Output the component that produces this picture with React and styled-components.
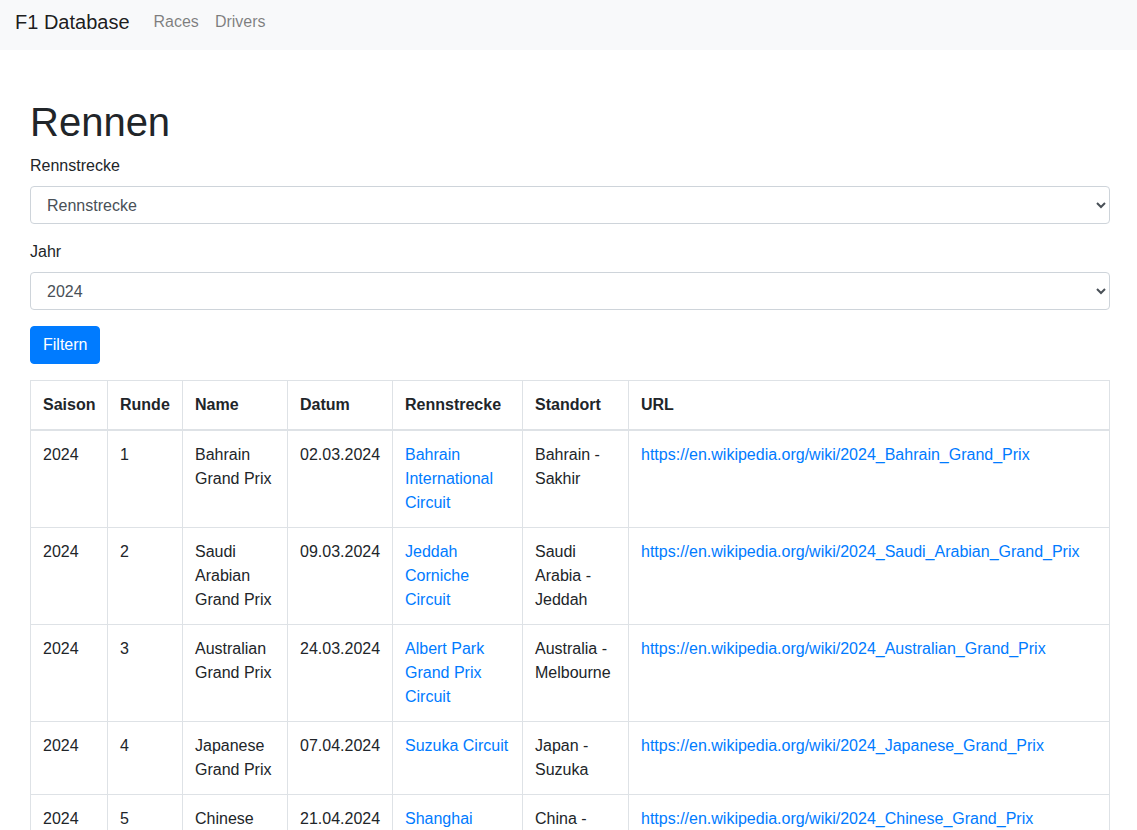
import React from 'react';
import styled, { createGlobalStyle } from 'styled-components';

const GlobalStyle = createGlobalStyle`
  body {
    margin: 0;
    font-family: "Liberation Sans", Arial, sans-serif;
    font-size: 16px;
    line-height: 1.5;
    color: #212529;
    background: #fff;
  }
  * { box-sizing: border-box; }
`;

const Navbar = styled.nav`
  display: flex;
  align-items: flex-start;
  height: 50px;
  padding: 0 16px 0 15px;
  background-color: #f8f9fa;
`;

const Brand = styled.a`
  padding-top: 7px;
  margin-right: 16px;
  font-size: 20px;
  line-height: 30px;
  color: rgba(0, 0, 0, 0.9);
  text-decoration: none;
`;

const NavLink = styled.a`
  padding: 10px 8px 0;
  line-height: 24px;
  color: rgba(0, 0, 0, 0.5);
  text-decoration: none;
`;

const Container = styled.main`
  padding: 48px 27px 0 30px;
`;

const Title = styled.h1`
  margin: 0 0 8px;
  font-size: 40px;
  font-weight: 500;
  line-height: 1.2;
`;

const FormGroup = styled.div`
  margin-bottom: 16px;
`;

const Label = styled.label`
  display: block;
  margin-bottom: 8px;
`;

const Select = styled.select`
  display: block;
  width: 100%;
  height: 38px;
  padding: 6px 12px;
  font-family: inherit;
  font-size: 16px;
  line-height: 1.5;
  color: #495057;
  background-color: #fff;
  border: 1px solid #ced4da;
  border-radius: 4px;
`;

const Button = styled.button`
  display: inline-block;
  height: 38px;
  padding: 6px 12px;
  font-family: inherit;
  font-size: 16px;
  line-height: 1.5;
  color: #fff;
  background-color: #007bff;
  border: 1px solid #007bff;
  border-radius: 4px;
`;

const Table = styled.table`
  width: 100%;
  margin-top: 16px;
  border-collapse: collapse;
  table-layout: fixed;
  color: #212529;
`;

const Col = styled.col`
  width: ${p => (p.$w ? `${p.$w}px` : 'auto')};
`;

const Th = styled.th`
  padding: 12px;
  text-align: left;
  vertical-align: bottom;
  font-weight: 700;
  border: 1px solid #dee2e6;
  border-bottom: 2px solid #dee2e6;
`;

const Td = styled.td`
  padding: 12px;
  vertical-align: top;
  border: 1px solid #dee2e6;
`;

const Link = styled.a`
  color: #007bff;
  text-decoration: none;
`;

const races = [
  ['1', 'Bahrain Grand Prix', '02.03.2024', 'Bahrain International Circuit', 'Bahrain - Sakhir', '2024_Bahrain_Grand_Prix'],
  ['2', 'Saudi Arabian Grand Prix', '09.03.2024', 'Jeddah Corniche Circuit', 'Saudi Arabia - Jeddah', '2024_Saudi_Arabian_Grand_Prix'],
  ['3', 'Australian Grand Prix', '24.03.2024', 'Albert Park Grand Prix Circuit', 'Australia - Melbourne', '2024_Australian_Grand_Prix'],
  ['4', 'Japanese Grand Prix', '07.04.2024', 'Suzuka Circuit', 'Japan - Suzuka', '2024_Japanese_Grand_Prix'],
  ['5', 'Chinese Grand Prix', '21.04.2024', 'Shanghai International Circuit', 'China - Shanghai', '2024_Chinese_Grand_Prix'],
];

const widths = [77, 75, 105, 105, 130, 106, null];
const headers = ['Saison', 'Runde', 'Name', 'Datum', 'Rennstrecke', 'Standort', 'URL'];

export default function App() {
  return (
    <>
      <GlobalStyle />
      <Navbar>
        <Brand href="#">F1 Database</Brand>
        <NavLink href="#">Races</NavLink>
        <NavLink href="#">Drivers</NavLink>
      </Navbar>
      <Container>
        <Title>Rennen</Title>
        <FormGroup>
          <Label>Rennstrecke</Label>
          <Select defaultValue="">
            <option value="">Rennstrecke</option>
          </Select>
        </FormGroup>
        <FormGroup>
          <Label>Jahr</Label>
          <Select defaultValue="2024">
            <option value="2024">2024</option>
          </Select>
        </FormGroup>
        <Button type="button">Filtern</Button>
        <Table>
          <colgroup>
            {widths.map((w, i) => <Col key={i} $w={w} />)}
          </colgroup>
          <thead>
            <tr>
              {headers.map(h => <Th key={h}>{h}</Th>)}
            </tr>
          </thead>
          <tbody>
            {races.map(r => {
              const url = `https://en.wikipedia.org/wiki/${r[5]}`;
              return (
                <tr key={r[0]}>
                  <Td>2024</Td>
                  <Td>{r[0]}</Td>
                  <Td>{r[1]}</Td>
                  <Td>{r[2]}</Td>
                  <Td><Link href="#">{r[3]}</Link></Td>
                  <Td>{r[4]}</Td>
                  <Td><Link href={url}>{url}</Link></Td>
                </tr>
              );
            })}
          </tbody>
        </Table>
      </Container>
    </>
  );
}
